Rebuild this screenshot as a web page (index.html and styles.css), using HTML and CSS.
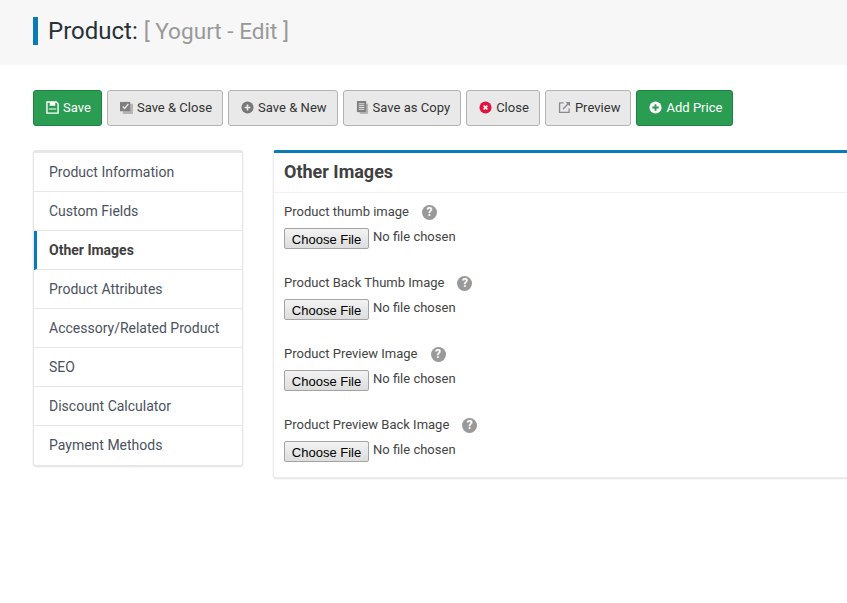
FILE: index.html
```html
<!DOCTYPE html>
<html lang="en">
<head>
<meta charset="utf-8">
<title>Product: Yogurt - Edit</title>
<link rel="stylesheet" href="styles.css">
</head>
<body>
<header class="page-head">
  <h1 class="page-title">Product: <small>[ Yogurt - Edit ]</small></h1>
</header>
<div class="toolbar">
  <button class="btn btn-green"><svg class="ic" viewBox="0 0 14 14"><path fill="none" stroke="#fff" stroke-width="1.5" d="M1 1h10l2 2v10H1z"/><path fill="#fff" d="M4 1h6v4H4zM3 8h8v1.2H3z"/></svg>Save</button>
  <button class="btn"><svg class="ic" viewBox="0 0 14 14"><path fill="#b5b5b5" d="M3 3h11v11H3z"/><path fill="#808080" d="M0 1h11v10H0z"/><path fill="none" stroke="#e9e9e9" stroke-width="1.4" d="M3 6l2 2 4-5"/></svg>Save &amp; Close</button>
  <button class="btn"><svg class="ic" viewBox="0 0 14 14"><circle cx="7" cy="7" r="6.5" fill="#777"/><path stroke="#e9e9e9" stroke-width="1.8" d="M3.8 7h6.4M7 3.8v6.4"/></svg>Save &amp; New</button>
  <button class="btn"><svg class="ic" viewBox="0 0 14 14"><path fill="#b5b5b5" d="M4 3h9v11H4z"/><path fill="#808080" d="M1 0h10v12H1z"/><path stroke="#e9e9e9" d="M3 3h6M3 5h6M3 7h6M3 9h6"/></svg>Save as Copy</button>
  <button class="btn"><svg class="ic" viewBox="0 0 14 14"><circle cx="7" cy="7" r="6.5" fill="#e2133f"/><path stroke="#fff" stroke-width="1.6" d="M5 5l4 4M9 5l-4 4"/></svg>Close</button>
  <button class="btn"><svg class="ic" viewBox="0 0 14 14"><path fill="none" stroke="#8a8a8a" stroke-width="1.4" d="M6 2H1.7v10.3H12V8"/><path fill="none" stroke="#8a8a8a" stroke-width="1.5" d="M5.5 8.5L12 2"/><path fill="#8a8a8a" d="M8 1h5v5z"/></svg>Preview</button>
  <button class="btn btn-green"><svg class="ic" viewBox="0 0 14 14"><circle cx="7" cy="7" r="6.5" fill="#fff"/><path stroke="#2a9d52" stroke-width="2" d="M3.5 7h7M7 3.5v7"/></svg>Add Price</button>
</div>
<main class="layout">
  <nav class="side">
    <a class="side-item">Product Information</a>
    <a class="side-item">Custom Fields</a>
    <a class="side-item active">Other Images</a>
    <a class="side-item">Product Attributes</a>
    <a class="side-item">Accessory/Related Product</a>
    <a class="side-item">SEO</a>
    <a class="side-item">Discount Calculator</a>
    <a class="side-item">Payment Methods</a>
  </nav>
  <section class="panel">
    <h2 class="panel-title">Other Images</h2>
    <div class="panel-body">
      <div class="field"><label class="field-label">Product thumb image<span class="help">?</span></label><input class="file" type="file"></div>
      <div class="field"><label class="field-label">Product Back Thumb Image<span class="help">?</span></label><input class="file" type="file"></div>
      <div class="field"><label class="field-label">Product Preview Image<span class="help">?</span></label><input class="file" type="file"></div>
      <div class="field"><label class="field-label">Product Preview Back Image<span class="help">?</span></label><input class="file" type="file"></div>
    </div>
  </section>
</main>
</body>
</html>
```
FILE: styles.css
```css
* { box-sizing: border-box; }
html, body { margin: 0; padding: 0; overflow: hidden; }
body { background: #fff; color: #333; font-family: Roboto, sans-serif; font-size: 14px; width: 847px; height: 603px; }

.page-head { height: 65px; background: #f7f7f7; padding: 17px 33px 0; }
.page-title { margin: 0; height: 28px; border-left: 5px solid #0a7cb5; padding-left: 10px; font-size: 24px; font-weight: 400; line-height: 28px; color: #263238; }
.page-title small { font-size: 22.6px; color: #999; }

.toolbar { display: flex; gap: 5px; padding: 25px 33px 0; }
.btn { display: flex; align-items: center; gap: 4px; height: 36px; padding: 0 10px 2px 12px; border: 1px solid #b3b3b3; border-radius: 3px; background: #e9e9e9; color: #333; font-family: Roboto, sans-serif; font-size: 13px; letter-spacing: .02px; }
.btn-green { background: #2a9d52; border-color: #1f8041; color: #fff; }
.ic { width: 13px; height: 13px; flex: none; }

.layout { display: flex; gap: 30px; align-items: flex-start; padding: 24px 0 0 33px; }
.side { width: 210px; flex: none; border: 1px solid #e6e6e6; border-top-width: 3px; border-radius: 3px; box-shadow: 0 1px 2px rgba(0,0,0,.12); background: #fff; }
.side-item { display: block; height: 39px; padding: 0 15px; line-height: 38px; border-bottom: 1px solid #e6e6e6; color: #4a5260; font-size: 14px; }
.side-item:last-child { height: 39px; border-bottom: 0; }
.side-item.active { border-left: 3px solid #0a7cb5; padding-left: 12px; font-weight: 700; color: #404040; }

.panel { width: 600px; flex: none; border: 1px solid #ececec; border-top: 3px solid #0a7cb5; border-radius: 3px 0 0 3px; box-shadow: 0 1px 2px rgba(0,0,0,.12); background: #fff; }
.panel-title { margin: 0; height: 40px; padding: 0 10px; line-height: 37px; font-size: 18px; font-weight: 700; color: #404040; border-bottom: 1px solid #f1f1f1; }
.panel-body { padding: 0 10px 5px; }
.field { height: 71px; padding-top: 9px; }
.field:last-child { height: 66px; }
.field-label { display: flex; align-items: center; height: 19px; font-size: 13px; color: #444; }
.help { display: inline-block; width: 15px; height: 15px; margin: 2px 0 0 13px; border-radius: 50%; background: #999; color: #fff; font-size: 12px; font-weight: 700; line-height: 15px; text-align: center; }
.file { display: block; height: 21px; margin-top: 7px; font-family: Roboto, sans-serif; font-size: 13px; color: #444; width: 300px; overflow: visible; }
.file::file-selector-button { height: 21px; width: 85px; padding: 2px 0 0; border: 1px solid #a3a3a3; border-radius: 2px; background: linear-gradient(#f3f3f3, #dddddd); font-family: "Liberation Sans", sans-serif; font-size: 13px; color: #000; vertical-align: -3px; }
```
